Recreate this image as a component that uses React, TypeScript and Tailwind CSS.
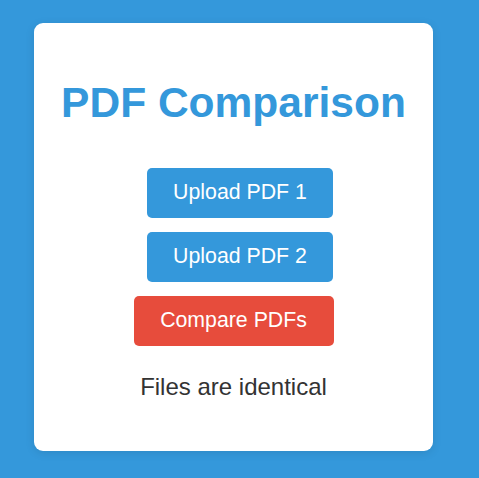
import React from "react";

export default function App() {
  return (
    <div
      className="w-full min-h-screen bg-[#3498db] pl-[34px] pt-[23px]"
      style={{ fontFamily: '"Liberation Sans", Arial, sans-serif', height: 478 }}
    >
      <div className="w-[399px] h-[428px] bg-white rounded-[9px] shadow-[0_2px_10px_rgba(0,0,0,0.1)] pt-[56px] flex flex-col items-center">
        <h1 className="text-[42.5px] leading-[48px] font-bold text-[#3498db]">PDF Comparison</h1>
        <div className="mt-[41px] flex flex-col items-center gap-[14px]">
          <button className="ml-[13px] w-[186px] h-[50px] rounded-[5px] bg-[#3498db] text-white text-[21.3px] flex items-center justify-center">
            Upload PDF 1
          </button>
          <button className="ml-[13px] w-[186px] h-[50px] rounded-[5px] bg-[#3498db] text-white text-[21.3px] flex items-center justify-center">
            Upload PDF 2
          </button>
          <button className="w-[200px] h-[50px] rounded-[5px] bg-[#e74c3c] text-white text-[21.3px] flex items-center justify-center">
            Compare PDFs
          </button>
        </div>
        <p className="mt-[27px] text-[24px] leading-[28px] text-[#333333]">Files are identical</p>
      </div>
    </div>
  );
}
